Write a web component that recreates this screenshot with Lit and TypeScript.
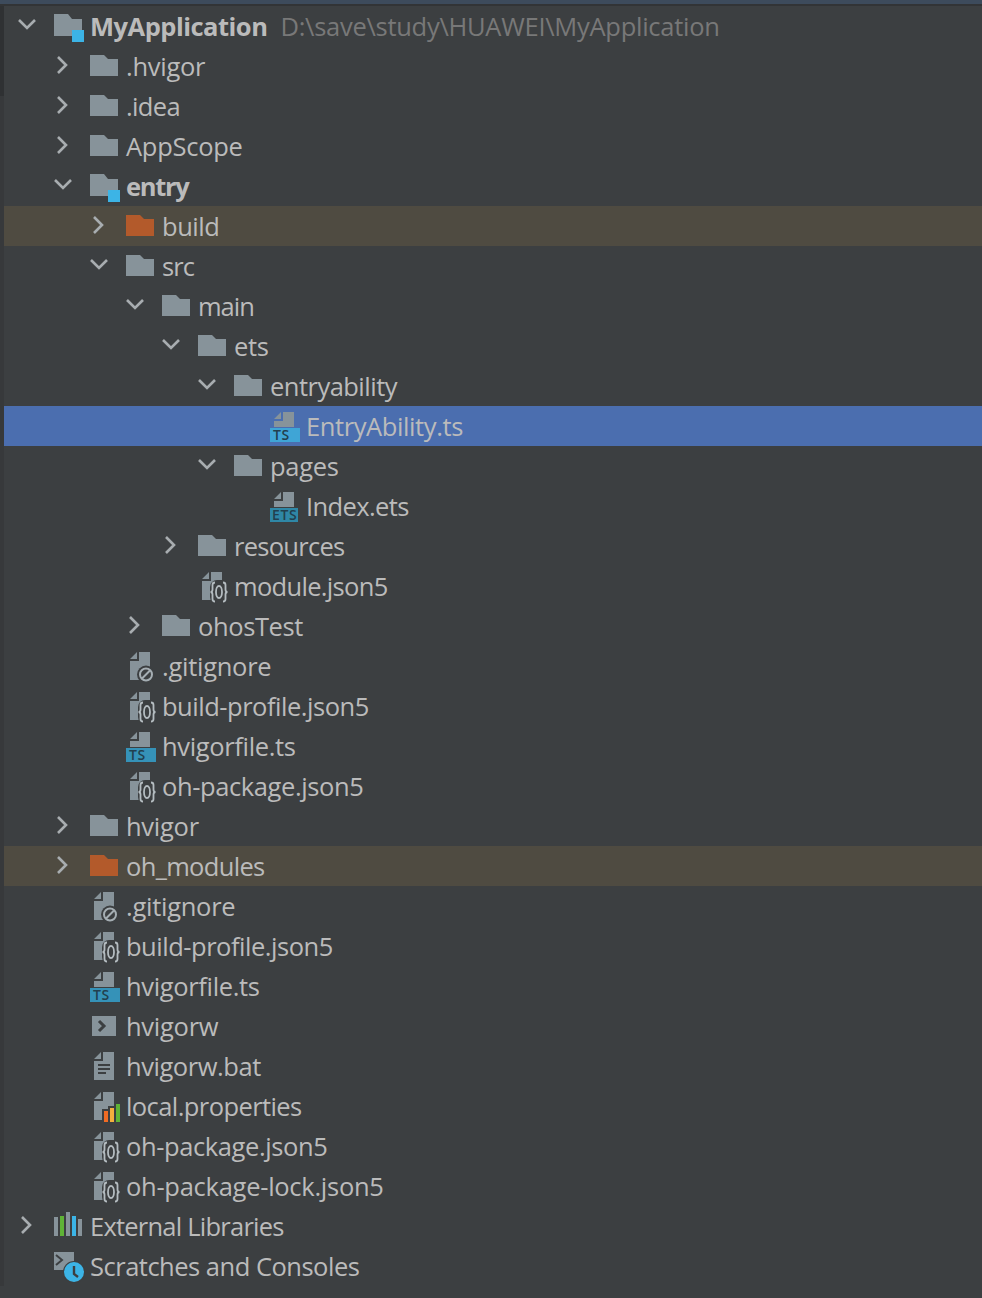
import { LitElement, html, css, svg } from "lit";
import { customElement } from "lit/decorators.js";

type Row = { d: number; c?: "o" | "c"; i: string; t: string; f?: number; hint?: string; bold?: boolean; cls?: string };

// f = width correction in px, spread over the label's letters
const rows: Row[] = [
  { d: 0, c: "o", i: "module", t: "MyApplication", hint: "D:\\save\\study\\HUAWEI\\MyApplication", bold: true },
  { d: 1, c: "c", i: "folder", t: ".hvigor" },
  { d: 1, c: "c", i: "folder", t: ".idea", f: -2 },
  { d: 1, c: "c", i: "folder", t: "AppScope" },
  { d: 1, c: "o", i: "module", t: "entry", bold: true, f: -4 },
  { d: 2, c: "c", i: "orange", t: "build", cls: "excl", f: -1 },
  { d: 2, c: "o", i: "folder", t: "src", f: -2 },
  { d: 3, c: "o", i: "folder", t: "main", f: -3 },
  { d: 4, c: "o", i: "folder", t: "ets" },
  { d: 5, c: "o", i: "folder", t: "entryability", f: -3 },
  { d: 6, i: "ts", t: "EntryAbility.ts", cls: "sel", f: -2 },
  { d: 5, c: "o", i: "folder", t: "pages" },
  { d: 6, i: "ets", t: "Index.ets", f: -3 },
  { d: 4, c: "c", i: "folder", t: "resources", f: -4 },
  { d: 4, i: "json", t: "module.json5", f: -5 },
  { d: 3, c: "c", i: "folder", t: "ohosTest", f: -1 },
  { d: 2, i: "ignore", t: ".gitignore" },
  { d: 2, i: "json", t: "build-profile.json5", f: -4 },
  { d: 2, i: "ts", t: "hvigorfile.ts", f: -1 },
  { d: 2, i: "json", t: "oh-package.json5", f: -2 },
  { d: 1, c: "c", i: "folder", t: "hvigor" },
  { d: 1, c: "c", i: "orange", t: "oh_modules", cls: "excl", f: -4 },
  { d: 1, i: "ignore", t: ".gitignore" },
  { d: 1, i: "json", t: "build-profile.json5", f: -4 },
  { d: 1, i: "ts", t: "hvigorfile.ts", f: -1 },
  { d: 1, i: "shell", t: "hvigorw" },
  { d: 1, i: "text", t: "hvigorw.bat", f: -2 },
  { d: 1, i: "props", t: "local.properties", f: -5 },
  { d: 1, i: "json", t: "oh-package.json5", f: -2 },
  { d: 1, i: "json", t: "oh-package-lock.json5" },
  { d: 0, c: "c", i: "libs", t: "External Libraries", f: -9 },
  { d: 0, i: "scratch", t: "Scratches and Consoles", f: -5 },
];

const G = "#87939a";
const BG = "#3c3f41";

const folder = (fill: string) => svg`<path fill=${fill} d="M0 9H14L18 13H28V30H0Z"/>`;
const fileD = "M4 13L11 6V13ZM13 6H24V34H4V15H13Z";
const fileBody = svg`<path fill=${G} d=${fileD}/>`;
const shortFile = svg`<path fill=${G} d="M4 13L11 6V13ZM13 6H24V21H4V15H13Z"/>`;

function icon(name: string, sel: boolean) {
  switch (name) {
    case "folder":
      return folder(G);
    case "orange":
      return folder("#b35a2b");
    case "module":
      return svg`<path fill=${G} d="M0 8H14L18 13H28V30H0Z"/><rect x="18" y="24" width="12" height="12" fill="#3cb4e6"/>`;
    case "ts":
      return svg`${shortFile}<rect x="0" y="22" width="30" height="14" fill=${sel ? "#3fa5d6" : "#3592b8"}/><text x="3" y="34" class="badge">TS</text>`;
    case "ets":
      return svg`${shortFile}<rect x="0" y="22" width="28" height="14" fill="#2f87a6"/><text x="2" y="34" class="badge">ETS</text>`;
    case "json":
      return svg`${fileBody}<rect x="12" y="14" width="20" height="24" rx="7" fill=${BG}/><g fill="none" stroke="#b4bcc0" stroke-width="1.8"><path d="M17 16.5Q14.5 16.5 14.5 19V23.5Q14.5 26 12.5 26Q14.5 26 14.5 28.5V33Q14.5 35.5 17 35.5"/><ellipse cx="21" cy="26" rx="3" ry="6"/><path d="M25 16.5Q27.5 16.5 27.5 19V23.5Q27.5 26 29.5 26Q27.5 26 27.5 28.5V33Q27.5 35.5 25 35.5"/></g>`;
    case "ignore":
      return svg`${fileBody}<circle cx="20" cy="28.5" r="9" fill=${BG}/><circle cx="20" cy="28.5" r="6" fill="none" stroke="#a5aeb3" stroke-width="2"/><path d="M16 32.5L24 24.5" stroke="#a5aeb3" stroke-width="2"/>`;
    case "shell":
      return svg`<rect x="2" y="10" width="24" height="20" fill=${G}/><path d="M9 15L14 20L9 25" fill="none" stroke=${BG} stroke-width="3"/>`;
    case "text":
      return svg`${fileBody}<path d="M8 19H20M8 23H20M8 27H16" stroke=${BG} stroke-width="2"/>`;
    case "props":
      return svg`${fileBody}<path fill=${BG} d="M12 36V23H18V20H24V16H32V36Z"/><rect x="14" y="25" width="4" height="11" fill="#ef6b24"/><rect x="20" y="22" width="4" height="14" fill="#f4af3d"/><rect x="26" y="18" width="4" height="18" fill="#5fb336"/>`;
    case "libs":
      return svg`<rect x="0" y="11" width="4" height="19" fill=${G}/><rect x="6" y="10" width="4" height="20" fill="#5fb336"/><rect x="12" y="6" width="4" height="24" fill=${G}/><rect x="18" y="10" width="4" height="20" fill="#3cb4e6"/><rect x="24" y="13" width="4" height="17" fill=${G}/>`;
    case "scratch":
      return svg`<rect x="0" y="6" width="20" height="18" fill=${G}/><path d="M2 9L8 14L2 19" fill="none" stroke=${BG} stroke-width="2"/><circle cx="20" cy="26" r="11" fill=${BG}/><circle cx="20" cy="26" r="10" fill="#3cb4e6"/><path d="M20 20V28L24 31" fill="none" stroke=${BG} stroke-width="2.4"/>`;
  }
  return svg``;
}

@customElement("app-root")
export class AppRoot extends LitElement {
  static styles = css`
    :host { display: block; width: 982px; height: 1298px; background: #3c3f41; overflow: hidden;
      font-family: "Open Sans", "Noto Sans", sans-serif; }
    .topbar { height: 4px; background: #3d4b5c; border-bottom: 2px solid #323436; }
    .tree-wrap { display: flex; }
    .gutter { width: 4px; flex: none; background: linear-gradient(#2f3133 0 90px, #37393b 90px); }
    .tree { display: flex; flex-direction: column; flex: 1; min-width: 0; }
    .row { height: 40px; display: flex; align-items: center; color: #bbbbbb; font-size: 25.5px; letter-spacing: -0.27px; white-space: nowrap; flex: none; }
    .row.sel { background: #4b6eaf; }
    .row.excl { background: #4f4b41; }
    .chev { width: 18px; height: 18px; margin-right: 18px; flex: none; }
    .chev.closed { transform: translate(-1px, -1px); }
    .chev.open { transform: translateY(-2px); }
    .chev path { fill: none; stroke: #a8adb0; stroke-width: 2.6; }
    .ico { width: 36px; height: 40px; flex: none; overflow: visible; }
    .badge { font: 600 14px "Open Sans", sans-serif; fill: #22404f; letter-spacing: 0.6px; }
    .label { padding-bottom: 1px; }
    .bold { font-weight: 700; letter-spacing: -0.5px; }
    .hint { color: #787878; margin-left: 13px; padding-bottom: 1px; }
  `;

  render() {
    return html`<div class="topbar"></div>
      <div class="tree-wrap"><div class="gutter"></div>
      <div class="tree">
        ${rows.map((r) => html`
          <div class="row ${r.cls ?? ""}" style="padding-left:${14 + r.d * 36}px">
            ${r.c
              ? html`<svg class="chev ${r.c === "o" ? "open" : "closed"}" viewBox="0 0 18 18"><path d=${r.c === "o" ? "M1 5L9 13L17 5" : "M5 1L13 9L5 17"}/></svg>`
              : html`<span class="chev"></span>`}
            <svg class="ico" viewBox="0 0 36 40">${icon(r.i, r.cls === "sel")}</svg>
            <span class="label ${r.bold ? "bold" : ""}" style=${r.f ? `letter-spacing:${(r.bold ? -0.5 : -0.27) + r.f / r.t.length}px` : ""}>${r.t}</span>
            ${r.hint ? html`<span class="hint">${r.hint}</span>` : ""}
          </div>`)}
      </div></div>`;
  }
}
